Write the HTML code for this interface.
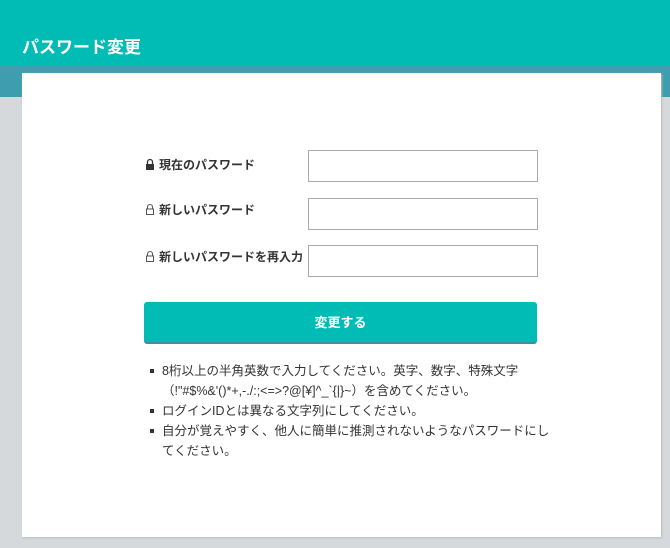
<!DOCTYPE html>
<html><head><meta charset="utf-8"><style>
body{margin:0;width:670px;height:548px;background:#d6d9db;font-family:"Liberation Sans","Noto Sans CJK JP",sans-serif;position:relative;overflow:hidden;color:#333}
.hdr{position:absolute;left:0;top:0;width:670px;height:97px;background:#00bcb4}
.hdr .band{position:absolute;left:0;top:65px;width:670px;height:32px;background:#3f9db0}
.ttl{position:absolute;left:22px;top:33px;color:#fff;font-weight:bold;font-size:17px}
.card{position:absolute;left:22px;top:73px;width:639px;height:464px;background:#fff;box-shadow:1px 1px 2px #bbb}
.lbl{position:absolute;left:145px;font-size:12px;font-weight:bold;color:#333}
.lbl svg{vertical-align:-1px;margin-right:4px}
.inp{position:absolute;left:308px;width:228px;height:30px;border:1px solid #aaa;background:#fff}
.btn{position:absolute;left:144px;top:302px;width:393px;height:40px;background:#00bcb4;border-bottom:2px solid #3f8fa0;border-radius:3px;color:#fff;font-weight:bold;font-size:13px;text-align:center;line-height:41px}
ul{position:absolute;left:148px;top:361px;width:395px;margin:0;padding:0 0 0 14px;font-size:12.5px;line-height:20px;list-style:none}
li{position:relative}
li:before{content:"";position:absolute;left:-12px;top:8px;width:4px;height:4px;background:#333}
</style></head><body>
<div class="hdr"><div class="band"></div></div>
<div class="ttl">パスワード変更</div>
<div class="card"></div>
<div class="lbl" style="top:156px"><svg width="10" height="12" viewBox="0 0 10 12"><path d="M2.5 6V4a2.5 2.5 0 0 1 5 0v2" fill="none" stroke="#333" stroke-width="1.3"/><rect x="1" y="6" width="8" height="6" fill="#333"/></svg>現在のパスワード</div>
<div class="lbl" style="top:201px"><svg width="10" height="12" viewBox="0 0 10 12"><path d="M2.5 6V4a2.5 2.5 0 0 1 5 0v2" fill="none" stroke="#555" stroke-width="1.1"/><rect x="1.5" y="6" width="7" height="5.5" fill="none" stroke="#555" stroke-width="1"/></svg>新しいパスワード</div>
<div class="lbl" style="top:248px"><svg width="10" height="12" viewBox="0 0 10 12"><path d="M2.5 6V4a2.5 2.5 0 0 1 5 0v2" fill="none" stroke="#555" stroke-width="1.1"/><rect x="1.5" y="6" width="7" height="5.5" fill="none" stroke="#555" stroke-width="1"/></svg>新しいパスワードを再入力</div>
<div class="inp" style="top:150px"></div>
<div class="inp" style="top:198px"></div>
<div class="inp" style="top:245px"></div>
<div class="btn">変更する</div>
<ul>
<li>8桁以上の半角英数で入力してください。英字、数字、特殊文字<br>（!"#$%&amp;'()*+,-./:;&lt;=&gt;?@[¥]^_`{|}~）を含めてください。</li>
<li>ログインIDとは異なる文字列にしてください。</li>
<li>自分が覚えやすく、他人に簡単に推測されないようなパスワードにしてください。</li>
</ul>
</body></html>
